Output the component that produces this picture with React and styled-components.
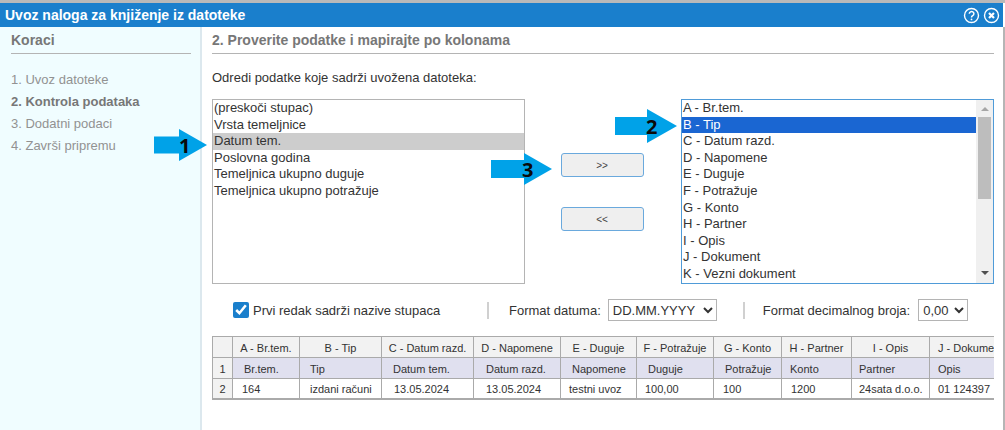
import React from "react";
import styled, { createGlobalStyle } from "styled-components";

const Global = createGlobalStyle`
  html, body { margin: 0; padding: 0; background: #fff; }
  body { font-family: "Liberation Sans", Arial, sans-serif; }
`;

const Page = styled.div`
  position: relative;
  width: 1005px;
  height: 430px;
  overflow: hidden;
  background: #fff;
  display: flex;
  flex-direction: column;
  border-top: 3px solid #b9b9b9;
  box-sizing: border-box;
`;

const TitleBar = styled.header`
  height: 24px;
  flex: none;
  margin-right: 2px;
  background: #1a7fcc;
  color: #fff;
  display: flex;
  align-items: center;
  padding: 0 3px 0 5px;
  box-sizing: border-box;
`;

const Title = styled.h1`
  flex: 1;
  margin: 0;
  font-size: 14px;
  font-weight: 700;
`;

const TitleIcon = styled.svg`
  width: 17px;
  height: 17px;
  margin-left: 3px;
  display: block;
`;

const Body = styled.div`
  flex: 1;
  display: flex;
  min-height: 0;
  border-right: 2px solid #b5b5b5;
`;

const Sidebar = styled.aside`
  width: 202px;
  flex: none;
  box-sizing: border-box;
  background: #f0fdff;
  border-right: 2px solid #dce8ee;
  padding: 0 9px 0 11px;
`;

const SectionHead = styled.h2`
  margin: 0;
  height: 26px;
  line-height: 27px;
  font-size: 14px;
  font-weight: 700;
  color: #777;
  border-bottom: 1px solid #b4b4b4;
`;

const Steps = styled.ol`
  list-style: none;
  margin: 15px 0 0;
  padding: 0;
`;

const Step = styled.li`
  height: 22px;
  line-height: 22px;
  font-size: 13px;
  font-weight: ${(p) => (p.$active ? 700 : 400)};
  color: ${(p) => (p.$active ? "#777" : "#929292")};
`;

const Main = styled.main`
  flex: 1;
  min-width: 0;
  padding: 0 9px 0 10px;
  display: flex;
  flex-direction: column;
`;

const Lead = styled.p`
  margin: 13px 0 0;
  height: 22px;
  line-height: 22px;
  font-size: 13px;
  color: #333;
`;

const Mapper = styled.div`
  margin-top: 10px;
  display: flex;
  height: 185px;
`;

const ListBox = styled.div`
  width: 313px;
  height: 185px;
  box-sizing: border-box;
  flex: none;
  display: flex;
  border: 1px solid ${(p) => (p.$focus ? "#4f9bd8" : "#b4b4b4")};
  overflow: hidden;
`;

const Options = styled.div`
  flex: 1;
  min-width: 0;
`;

const Option = styled.div`
  height: 16.6px;
  line-height: 16px;
  padding-left: 1px;
  font-size: 13px;
  color: ${(p) => (p.$kind === "blue" ? "#fff" : "#333")};
  background: ${(p) =>
    p.$kind === "blue" ? "#1a66d2" : p.$kind === "gray" ? "#cdcdcd" : "transparent"};
`;

const ScrollTrack = styled.div`
  width: 17px;
  flex: none;
  background: #f0f0f0;
  display: flex;
  flex-direction: column;
  align-items: center;
`;

const ScrollArrow = styled.div`
  width: 0;
  height: 0;
  margin: ${(p) => (p.$up ? "7px 0 6px" : "0 0 8px")};
  border-left: 4px solid transparent;
  border-right: 4px solid transparent;
  ${(p) => (p.$up ? "border-bottom: 4px solid #a6a6a6;" : "border-top: 4px solid #505050;")}
`;

const ScrollThumb = styled.div`
  width: 13px;
  height: 82px;
  background: #bdbdbd;
  margin-bottom: auto;
`;

const MoveButtons = styled.div`
  width: 156px;
  flex: none;
  display: flex;
  flex-direction: column;
  align-items: center;
  gap: 30px;
  padding: 54px 2px 0 0;
  box-sizing: border-box;
`;

const MoveButton = styled.button`
  width: 83px;
  height: 24px;
  padding: 0;
  background: #efefef;
  border: 1px solid #6aa9dd;
  border-radius: 3px;
  font: 10px "Liberation Sans", Arial, sans-serif;
  color: #444;
`;

const OptionsRow = styled.div`
  display: flex;
  align-items: center;
  height: 24px;
  margin-top: 14px;
  padding-left: 21px;
  font-size: 13px;
  color: #333;
`;

const CheckLabel = styled.label`
  display: flex;
  align-items: center;
  gap: 4px;
  width: 254px;
`;

const CheckBox = styled.input`
  width: 16px;
  height: 16px;
  margin: 0;
  accent-color: #1a7fcc;
`;

const Divider = styled.span`
  width: 2px;
  height: 17px;
  background: #d0d0d0;
  flex: none;
  margin-right: ${(p) => p.$after}px;
`;

const Sel = styled.select`
  height: 22px;
  margin-left: ${(p) => p.$before}px;
  width: ${(p) => p.$w}px;
  margin-right: ${(p) => p.$after || 0}px;
  font: 13px "Liberation Sans", Arial, sans-serif;
  color: #333;
  background: #fff;
  border: 1px solid #b4b4b4;
  border-radius: 0;
  padding: 0;
`;

const TableWrap = styled.div`
  margin-top: 14px;
  width: 782px;
  overflow: hidden;
`;

const Grid = styled.table`
  border-collapse: separate;
  border-spacing: 0;
  table-layout: fixed;
  width: 795px;
  font-size: 11px;
  color: #333;
  border-top: 1px solid #aaa;
`;

const Row = styled.tr`
  background: ${(p) => (p.$tone === "head" ? "#f2f2f2" : p.$tone === "map" ? "#e0e0ef" : "#fff")};
`;

const Cell = styled.td`
  box-sizing: border-box;
  height: 21px;
  padding: 1px 0 0 ${(p) => p.$indent ?? 0}px;
  text-align: ${(p) => (p.$indent === undefined ? "center" : "left")};
  border-right: 1px solid #aaa;
  border-bottom: ${(p) => (p.$last ? 2 : 1)}px solid #aaa;
  white-space: nowrap;
  overflow: hidden;
  &:first-child { border-left: 1px solid #aaa; background: #f2f2f2; }
`;

const Overlay = styled.div`
  position: absolute;
  left: ${(p) => p.$x}px;
  top: ${(p) => p.$y}px;
  width: ${(p) => p.$w}px;
  height: ${(p) => p.$h}px;
`;

const ArrowShape = styled.svg`
  position: absolute;
  inset: 0;
  width: 100%;
  height: 100%;
`;

const ArrowNum = styled.span`
  position: absolute;
  top: 0;
  bottom: 0;
  left: ${(p) => p.$left}px;
  display: flex;
  align-items: center;
  font: 700 20px "Open Sans", sans-serif;
  color: #0a0a0a;
`;

function Arrow({ x, y, w, h, shaft, num, left }) {
  const top = (h - shaft) / 2;
  const neck = w - (h - 4);
  return (
    <Overlay $x={x} $y={y} $w={w} $h={h}>
      <ArrowShape viewBox={`0 0 ${w} ${h}`}>
        <polygon
          fill="#00a2e8"
          points={`0,${top} ${neck},${top} ${neck},0 ${w},${h / 2} ${neck},${h} ${neck},${h - top} 0,${h - top}`}
        />
      </ArrowShape>
      <ArrowNum $left={left}>{num}</ArrowNum>
    </Overlay>
  );
}

const leftItems = ["(preskoči stupac)", "Vrsta temeljnice", "Datum tem.", "Poslovna godina", "Temeljnica ukupno duguje", "Temeljnica ukupno potražuje"];
const rightItems = ["A - Br.tem.", "B - Tip", "C - Datum razd.", "D - Napomene", "E - Duguje", "F - Potražuje", "G - Konto", "H - Partner", "I - Opis", "J - Dokument", "K - Vezni dokument"];
const widths = [21, 67, 82, 92, 87, 76, 77, 68, 70, 78, 77];
const headRow = [[""], ["A - Br.tem."], ["B - Tip"], ["C - Datum razd."], ["D - Napomene"], ["E - Duguje"], ["F - Potražuje"], ["G - Konto"], ["H - Partner"], ["I - Opis"], ["J - Dokument", 8]];
const mapRow = [["1"], ["Br.tem.", 11], ["Tip", 10], ["Datum tem.", 11], ["Datum razd.", 12], ["Napomene", 11], ["Duguje", 11], ["Potražuje", 11], ["Konto", 8], ["Partner", 7], ["Opis", 8]];
const dataRow = [["2"], ["164", 9], ["izdani računi", 10], ["13.05.2024", 12], ["13.05.2024", 12], ["testni uvoz", 8], ["100,00", 8], ["100", 9], ["1200", 9], ["24sata d.o.o.", 7], ["01 124397", 8]];

export default function App() {
  return (
    <Page>
      <Global />
      <TitleBar>
        <Title>Uvoz naloga za knjiženje iz datoteke</Title>
        <TitleIcon viewBox="0 0 17 17" fill="none" stroke="#fff" strokeWidth="1.4">
          <circle cx="8.5" cy="8.5" r="7" />
          <path d="M6.3 6.7a2.3 2.2 0 1 1 3.4 2c-.8.5-1.2.9-1.2 1.8" strokeWidth="1.5" />
          <circle cx="8.5" cy="12.4" r=".9" fill="#fff" stroke="none" />
        </TitleIcon>
        <TitleIcon viewBox="0 0 17 17" fill="none" stroke="#fff" strokeWidth="1.4">
          <circle cx="8.5" cy="8.5" r="7" />
          <path d="M6 6l5 5M11 6l-5 5" strokeWidth="2.2" />
        </TitleIcon>
      </TitleBar>
      <Body>
        <Sidebar>
          <SectionHead>Koraci</SectionHead>
          <Steps>
            <Step>1. Uvoz datoteke</Step>
            <Step $active>2. Kontrola podataka</Step>
            <Step>3. Dodatni podaci</Step>
            <Step>4. Završi pripremu</Step>
          </Steps>
        </Sidebar>
        <Main>
          <SectionHead>2. Proverite podatke i mapirajte po kolonama</SectionHead>
          <Lead>Odredi podatke koje sadrži uvožena datoteka:</Lead>
          <Mapper>
            <ListBox>
              <Options>
                {leftItems.map((t, i) => (
                  <Option key={t} $kind={i === 2 ? "gray" : undefined}>{t}</Option>
                ))}
              </Options>
            </ListBox>
            <MoveButtons>
              <MoveButton>&gt;&gt;</MoveButton>
              <MoveButton>&lt;&lt;</MoveButton>
            </MoveButtons>
            <ListBox $focus>
              <Options>
                {rightItems.map((t, i) => (
                  <Option key={t} $kind={i === 1 ? "blue" : undefined}>{t}</Option>
                ))}
              </Options>
              <ScrollTrack>
                <ScrollArrow $up />
                <ScrollThumb />
                <ScrollArrow />
              </ScrollTrack>
            </ListBox>
          </Mapper>
          <OptionsRow>
            <CheckLabel>
              <CheckBox type="checkbox" defaultChecked />
              Prvi redak sadrži nazive stupaca
            </CheckLabel>
            <Divider $after={20} />
            Format datuma:
            <Sel $w={109} $before={7} $after={26} defaultValue="d">
              <option value="d">DD.MM.YYYY</option>
            </Sel>
            <Divider $after={18} />
            Format decimalnog broja:
            <Sel $w={50} $before={8} defaultValue="z">
              <option value="z">0,00</option>
            </Sel>
          </OptionsRow>
          <TableWrap>
            <Grid>
              <colgroup>
                {widths.map((w, i) => <col key={i} style={{ width: w }} />)}
              </colgroup>
              <tbody>
                <Row $tone="head">
                  {headRow.map(([t, ind], i) => <Cell key={i} $indent={ind}>{t}</Cell>)}
                </Row>
                <Row $tone="map">
                  {mapRow.map(([t, ind], i) => <Cell key={i} $indent={ind}>{t}</Cell>)}
                </Row>
                <Row>
                  {dataRow.map(([t, ind], i) => <Cell key={i} $indent={ind} $last>{t}</Cell>)}
                </Row>
              </tbody>
            </Grid>
          </TableWrap>
        </Main>
      </Body>
      <Arrow x={154} y={126} w={53} h={32} shaft={17} num="1" left={25} />
      <Arrow x={615} y={106} w={62} h={34} shaft={18} num="2" left={31} />
      <Arrow x={491} y={150} w={61} h={32} shaft={18} num="3" left={31} />
    </Page>
  );
}
